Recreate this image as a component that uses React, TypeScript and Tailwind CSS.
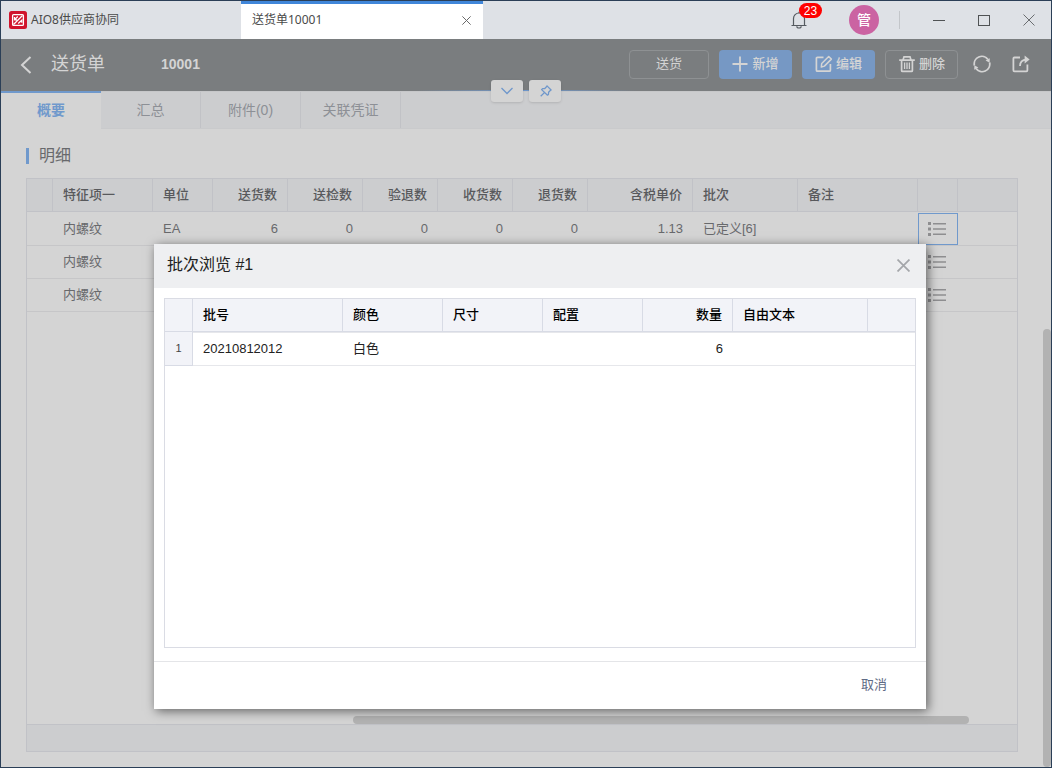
import React from "react";

type Align = "left" | "right";

interface Column {
  label: string;
  width?: string;
  align?: Align;
}

const detailColumns: Column[] = [
  { label: "", width: "w-[26px]" },
  { label: "特征项一", width: "w-[100px]" },
  { label: "单位", width: "w-[60px]" },
  { label: "送货数", width: "w-[75px]", align: "right" },
  { label: "送检数", width: "w-[75px]", align: "right" },
  { label: "验退数", width: "w-[75px]", align: "right" },
  { label: "收货数", width: "w-[75px]", align: "right" },
  { label: "退货数", width: "w-[75px]", align: "right" },
  { label: "含税单价", width: "w-[105px]", align: "right" },
  { label: "批次", width: "w-[105px]" },
  { label: "备注", width: "w-[120px]" },
];

const detailRows: string[][] = [
  ["", "内螺纹", "EA", "6", "0", "0", "0", "0", "1.13", "已定义[6]", ""],
  ["", "内螺纹", "", "", "", "", "", "", "", "", ""],
  ["", "内螺纹", "", "", "", "", "", "", "", "", ""],
];

const batchColumns: Column[] = [
  { label: "批号", width: "w-[150px]" },
  { label: "颜色", width: "w-[100px]" },
  { label: "尺寸", width: "w-[100px]" },
  { label: "配置", width: "w-[100px]" },
  { label: "数量", width: "w-[90px]", align: "right" },
  { label: "自由文本", width: "w-[135px]" },
  { label: "" },
];

const batchRows: string[][] = [["20210812012", "白色", "", "", "6", "", ""]];

const tabs = ["概要", "汇总", "附件(0)", "关联凭证"];

function Logo() {
  return (
    <svg className="h-[18px] w-[18px] shrink-0" viewBox="0 0 18 18" aria-hidden="true">
      <rect width="18" height="18" rx="2.5" fill="#d0142c" />
      <rect x="3.600" y="3.600" width="10.800" height="10.800" rx="1" fill="#d0142c" stroke="#fff" strokeWidth="1.300" />
      <path d="M5.5 8.800l3.300-3.300M4.500 13.500l9-9M9.200 12.500l3.600-3.300v2.600M5.500 6v2.800h2.500" fill="none" stroke="#fff" strokeWidth="1.300" />
    </svg>
  );
}

function Cross({ className, width = 1 }: { className: string; width?: number }) {
  return (
    <svg className={className} viewBox="0 0 12 12" fill="none" stroke="currentColor" strokeWidth={width} aria-hidden="true">
      <path d="M.5.5l11 11M11.5.5l-11 11" />
    </svg>
  );
}

function BellIcon() {
  return (
    <svg className="h-[18px] w-4" viewBox="0 0 16 18" fill="none" stroke="currentColor" strokeWidth="1.2" aria-hidden="true">
      <path d="M.5 14.5h15M2.5 14.5V7.5a5.5 5.5 0 0 1 11 0v7M8 2V.8M5.8 15.2a2.2 1.8 0 0 0 4.4 0" />
    </svg>
  );
}

function PlusIcon() {
  return (
    <svg className="h-4 w-4" viewBox="0 0 16 16" fill="none" stroke="currentColor" strokeWidth="1.8" aria-hidden="true">
      <path d="M8 .5v15M.5 8h15" />
    </svg>
  );
}

function EditIcon() {
  return (
    <svg className="h-[18px] w-[18px]" viewBox="0 0 18 18" fill="none" stroke="currentColor" strokeWidth="1.7" strokeLinejoin="round" aria-hidden="true">
      <path d="M8.500 2.400H2.400a1 1 0 0 0-1 1v11.800a1 1 0 0 0 1 1h12a1 1 0 0 0 1-1V9" />
      <path d="M6.300 12l.4-3.500 7-7 2.700 2.600-7 7z" strokeWidth="1.500" />
    </svg>
  );
}

function TrashIcon() {
  return (
    <svg className="h-[18px] w-[18px]" viewBox="0 0 18 18" fill="none" stroke="currentColor" strokeWidth="1.7" aria-hidden="true">
      <path d="M1.200 5.200h15.600M5 5l1-3.200h6L13 5M3.600 5.200v10.200c0 .6.400 1 1 1h8.800c.6 0 1-.4 1-1V5.200" />
      <path d="M6.600 7.500v6.500M9 7.500v6.500M11.400 7.500v6.500" strokeWidth="1.300" />
    </svg>
  );
}

function RefreshIcon() {
  return (
    <svg className="h-[18px] w-[18px]" viewBox="0 0 18 18" fill="none" stroke="currentColor" strokeWidth="1.8" aria-hidden="true">
      <path d="M1.400 10.500A7.600 7.600 0 0 1 15 4.500M16.600 7.500A7.600 7.600 0 0 1 3 13.500" />
      <path d="M16.800 3.200l-.2 4.600-4-2.200zM1.200 14.800l.2-4.600 4 2.200z" fill="currentColor" stroke="none" />
    </svg>
  );
}

function ShareIcon() {
  return (
    <svg className="h-[18px] w-[18px]" viewBox="0 0 18 18" fill="none" stroke="currentColor" strokeWidth="1.8" aria-hidden="true">
      <path d="M8 2.500H2.400a1 1 0 0 0-1 1v11.800a1 1 0 0 0 1 1h12a1 1 0 0 0 1-1V9.500M8 11C8 7.200 10 4.800 14.500 4.600" />
      <path d="M12.600.6l5 4-5 4z" fill="currentColor" stroke="none" />
    </svg>
  );
}

function PinIcon() {
  return (
    <svg className="h-3 w-3" viewBox="0 0 12 12" fill="none" stroke="currentColor" strokeWidth="1.3" strokeLinejoin="round" aria-hidden="true">
      <path d="M7 .9l4.1 4.1-1.1.7-1.4 1.5-.2 2.3-.9.7L1.600 4.600l.9-.9 2.300-.2L6.300 2zM4.400 7.600L.7 11.300" />
    </svg>
  );
}

function ListIcon() {
  return (
    <svg className="h-[14px] w-[18px]" viewBox="0 0 18 14" fill="#8e8e90" aria-hidden="true">
      <path d="M0 0h3v3H0zM0 5.500h3v3H0zM0 11h3v3H0zM5 1h13v1.400H5zM5 6.300h13v1.400H5zM5 11.600h13V13H5z" />
    </svg>
  );
}

function TitleBar() {
  return (
    <div className="flex h-[38px] shrink-0 items-stretch bg-[#dee1e6] font-['Noto_Sans','Noto_Sans_CJK_SC',sans-serif] text-xs text-[#4a4a4a]">
      <div className="flex w-60 items-center gap-1 pl-2">
        <Logo />
        <span>AIO8供应商协同</span>
      </div>
      <div className="flex w-[242px] items-center justify-between border-t-[3px] border-[#4086d9] bg-white pr-3 pb-[3px] pl-[11px]">
        <span>送货单10001</span>
        <button type="button" aria-label="关闭标签" className="pt-px text-[#666]">
          <Cross className="h-[9px] w-[9px]" width={1.3} />
        </button>
      </div>
      <div className="ml-auto flex items-center">
        <button type="button" aria-label="通知" className="relative mr-[42px] text-[#555a60]">
          <BellIcon />
          <span className="absolute -top-2 left-2 flex h-[15px] w-[23px] items-center justify-center rounded-full bg-[#f00] font-['Liberation_Sans',sans-serif] text-xs text-white">
            23
          </span>
        </button>
        <button type="button" className="flex h-[30px] w-[30px] items-center justify-center rounded-full bg-[#cb63a2] text-sm font-medium text-white">
          管
        </button>
        <span className="mr-4 ml-5 h-[18px] w-px bg-[#c3c6ca]" />
        <button type="button" aria-label="最小化" className="flex h-full w-[45px] items-center justify-center">
          <span className="h-px w-3 bg-[#4f5254]" />
        </button>
        <button type="button" aria-label="最大化" className="flex h-full w-[45px] items-center justify-center">
          <span className="h-[11px] w-3 border border-[#4f5254]" />
        </button>
        <button type="button" aria-label="关闭" className="flex h-full w-[45px] items-center justify-center text-[#6a6d70]">
          <Cross className="h-3 w-3" />
        </button>
      </div>
    </div>
  );
}

function Header() {
  return (
    <header className="relative flex h-[52px] shrink-0 items-center bg-[#7a7d7f] pr-[21px] pb-[2px] pl-[19px] text-[#d4d4d4]">
      <button type="button" aria-label="返回" className="mr-[19px] pt-[2px]">
        <svg className="h-[18px] w-3" viewBox="0 0 12 18" fill="none" stroke="currentColor" strokeWidth="2" aria-hidden="true">
          <path d="M10.500 1L2 9l8.500 8" />
        </svg>
      </button>
      <h1 className="w-[110px] text-lg leading-6">送货单</h1>
      <span className="text-sm font-bold">10001</span>
      <div className="ml-auto flex items-center gap-2.5 text-[13px]">
        <button type="button" className="h-[29px] w-20 rounded border border-[#8e9193]">送货</button>
        <button type="button" className="flex h-[29px] w-[73px] items-center justify-center gap-1 rounded bg-[#7698c4] font-medium">
          <PlusIcon />
          新增
        </button>
        <button type="button" className="flex h-[29px] w-[73px] items-center justify-center gap-[3px] rounded bg-[#7698c4] font-medium">
          <EditIcon />
          编辑
        </button>
        <button type="button" className="flex h-[29px] w-[73px] items-center justify-center gap-[3px] rounded border border-[#8e9193] font-medium">
          <TrashIcon />
          删除
        </button>
        <button type="button" aria-label="刷新" className="ml-[5px]">
          <RefreshIcon />
        </button>
        <button type="button" aria-label="分享" className="ml-[11px]">
          <ShareIcon />
        </button>
      </div>
      <div className="absolute top-[41px] left-1/2 z-10 -translate-x-1/2">
        <div className="flex w-[220px] justify-center gap-1.5 text-[#6f97cb]">
          <span className="absolute top-[10px] left-0 -z-10 h-px w-full bg-linear-to-r from-transparent via-[#6f97cb] to-transparent" />
          <button type="button" aria-label="展开" className="flex h-[22px] w-8 items-center justify-center rounded-[3px] bg-[#d4d4d4] pb-px shadow">
            <svg className="h-2 w-3" viewBox="0 0 12 8" fill="none" stroke="currentColor" strokeWidth="1.3" aria-hidden="true">
              <path d="M.5 1L6 6.500 11.500 1" />
            </svg>
          </button>
          <button type="button" aria-label="固定" className="flex h-[22px] w-8 items-center justify-center rounded-[3px] bg-[#d4d4d4] pb-px pl-[2px] shadow">
            <PinIcon />
          </button>
        </div>
      </div>
    </header>
  );
}

function Tabs() {
  return (
    <nav className="flex h-[38px] shrink-0 border-t border-b border-t-[#c6c7c9] border-b-[#c9cacc] bg-[#cccdcf] text-sm">
      {tabs.map((tab, i) => (
        <button
          key={tab}
          type="button"
          className={
            i === 0
              ? "-mt-px -mb-px w-[100px] border-t-2 border-[#7099cc] bg-[#d4d4d4] pb-[2px] font-bold text-[#7099cc]"
              : "w-[100px] border-r border-[#c1c2c6] text-[#8d9096]"
          }
        >
          {tab}
        </button>
      ))}
    </nav>
  );
}

function DetailTable() {
  return (
    <div className="flex min-h-0 flex-1 flex-col border border-[#c1c2c7]">
      <table className="w-full table-fixed border-separate border-spacing-0 text-[13px] text-[#68696c]">
        <thead>
          <tr>
            {detailColumns.map((c, i) => (
              <th
                key={i}
                className={`h-[33px] border-r border-b border-[#c1c2c7] bg-[#cccdcf] px-[10px] py-0 font-medium whitespace-nowrap text-[#58595c] ${c.width ?? ""} ${c.align === "right" ? "text-right" : "text-left"}`}
              >
                {c.label}
              </th>
            ))}
            <th className="w-10 border-r border-b border-[#c1c2c7] bg-[#cccdcf] p-0" />
            <th className="border-b border-[#c1c2c7] bg-[#cccdcf] p-0" />
          </tr>
        </thead>
        <tbody>
          {detailRows.map((row, r) => (
            <tr key={r} className={r === 0 ? "h-[34px]" : "h-[33px]"}>
              {row.map((value, i) => (
                <td
                  key={i}
                  className={`border-b border-[#c6c6c8] px-[10px] py-0 whitespace-nowrap ${detailColumns[i].align === "right" ? "text-right" : "text-left"}`}
                >
                  {value}
                </td>
              ))}
              <td className="border-b border-[#c6c6c8] p-0">
                <button
                  type="button"
                  aria-label="批次浏览"
                  className={
                    r === 0
                      ? "mt-px flex h-8 w-full items-center justify-center border border-[#7099cc] pr-[2px]"
                      : "flex h-8 w-full items-center justify-center pr-[2px]"
                  }
                >
                  <ListIcon />
                </button>
              </td>
              <td className="border-b border-[#c6c6c8] p-0" />
            </tr>
          ))}
        </tbody>
      </table>
      <div className="mt-auto flex justify-end pr-12">
        <div className="h-2 w-[616px] rounded-full bg-[#b2b2b2]" />
      </div>
      <div className="h-[27px] shrink-0 border-t border-[#c1c2c7] bg-[#cccdcf]" />
    </div>
  );
}

function BatchDialog() {
  return (
    <div
      role="dialog"
      aria-labelledby="batch-title"
      className="absolute top-[243px] right-[125px] bottom-[58px] left-[153px] z-20 flex flex-col bg-white text-[#222] shadow-[2px_2px_10px_rgba(0,0,0,0.55)]"
    >
      <div className="flex h-11 shrink-0 items-center justify-between bg-[#eeeff1] pr-4 pb-[2px] pl-[13px]">
        <h2 id="batch-title" className="text-base text-[#222]">批次浏览 #1</h2>
        <button type="button" aria-label="关闭" className="text-[#a4a6aa]">
          <Cross className="h-[13px] w-[13px]" width={1.6} />
        </button>
      </div>
      <div className="mx-[10px] mt-[10px] mb-[13px] min-h-0 flex-1 border border-[#dadce4]">
        <table className="w-full table-fixed border-separate border-spacing-0 text-[13px]">
          <thead>
            <tr>
              <th className="h-[33px] w-7 border-r border-b border-[#d8dbe5] bg-[#f2f3f8] p-0" />
              {batchColumns.map((c, i) => (
                <th
                  key={i}
                  className={`h-[33px] border-b border-[#d8dbe5] bg-[#f2f3f8] px-[10px] py-0 font-medium whitespace-nowrap text-black ${c.width ?? ""} ${c.align === "right" ? "text-right" : "text-left"} ${i < batchColumns.length - 1 ? "border-r" : ""}`}
                >
                  {c.label}
                </th>
              ))}
            </tr>
          </thead>
          <tbody>
            {batchRows.map((row, r) => (
              <tr key={r} className="h-[34px]">
                <td className="border-r border-b border-[#d8dbe5] bg-[#f2f3f8] p-0 text-center text-[11px] text-[#444]">{r + 1}</td>
                {row.map((value, i) => (
                  <td
                    key={i}
                    className={`border-t border-b border-[#e6e7eb] px-[10px] py-0 whitespace-nowrap ${batchColumns[i].align === "right" ? "text-right" : "text-left"}`}
                  >
                    {value}
                  </td>
                ))}
              </tr>
            ))}
          </tbody>
        </table>
      </div>
      <div className="flex h-12 shrink-0 items-center justify-end border-t border-[#e4e5e8] pr-[39px] pb-px text-[13px] text-[#5f6b85]">
        <button type="button">取消</button>
      </div>
    </div>
  );
}

export default function App() {
  return (
    <div className="relative flex h-screen flex-col overflow-hidden border border-[#2b3f57] bg-[#d4d4d4] font-['Liberation_Sans','Noto_Sans_CJK_SC',sans-serif]">
      <TitleBar />
      <Header />
      <Tabs />
      <main className="flex min-h-0 flex-1">
        <section className="flex min-w-0 flex-1 flex-col pt-[15px] pr-[25px] pb-[15px] pl-[25px]">
          <div className="mb-[10px] flex h-6 shrink-0 items-center gap-[10px]">
            <span className="h-4 w-[3px] bg-[#7099cc]" />
            <h2 className="text-base leading-6 text-[#68696c]">明细</h2>
          </div>
          <DetailTable />
        </section>
        <div className="flex w-2 shrink-0 flex-col pt-[200px]">
          <div className="flex-1 rounded-full bg-[#b2b2b2]" />
        </div>
      </main>
      <BatchDialog />
    </div>
  );
}
